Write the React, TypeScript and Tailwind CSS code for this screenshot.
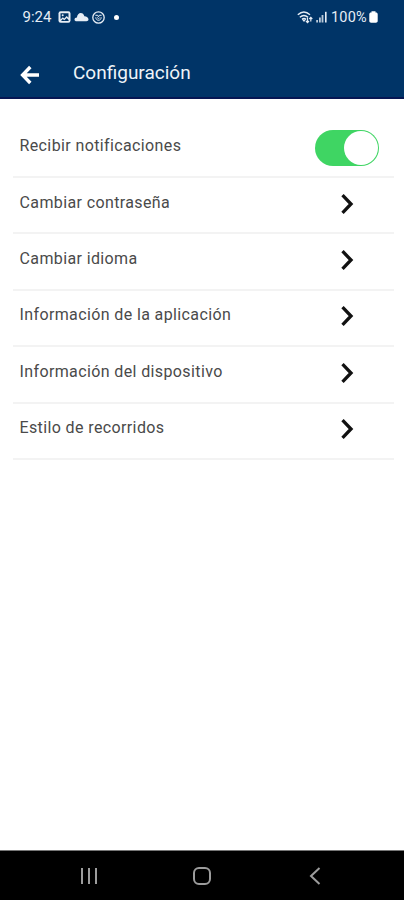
const options = [
  "Cambiar contraseña",
  "Cambiar idioma",
  "Información de la aplicación",
  "Información del dispositivo",
  "Estilo de recorridos",
];

function StatusBar() {
  return (
    <div className="flex h-[34px] items-center justify-between pr-[26px] pl-[22.500px] text-[#e6edf5]">
      <div className="flex items-center">
        <span className="w-[35px] text-[15px] leading-[34px] whitespace-nowrap">9:24</span>
        <svg viewBox="0 0 13 12" className="h-3 w-[13px]" aria-hidden>
          <rect x="0.5" y="0.2" width="12" height="11.6" rx="2.2" fill="currentColor" />
          <path d="M2.500 2.200h8v4.600L8.700 5 6.300 7.600 4.800 6.300 2.500 8.500z" fill="#003467" />
          <path d="M3 10l1.800-2 1.500 1.300L8.700 7l1.900 2v1z" fill="#003467" />
          <circle cx="4.700" cy="4.200" r="1" fill="currentColor" />
        </svg>
        <svg viewBox="0 0 15 10" className="ml-[3px] h-[10px] w-[15px]" fill="currentColor" aria-hidden>
          <path d="M3 9.200C1.200 9.200.5 8.400.5 7.400c0-1.200 1-2 2.400-2C3.300 2.800 4.800 1 6.700 1c1.800 0 3.200 1.200 3.700 3.300 2.300.1 4.100 1.400 4.100 3.200 0 1.100-.9 1.700-2.100 1.700z" />
        </svg>
        <svg viewBox="0 0 13 13" className="ml-[3px] h-[13px] w-[13px]" fill="none" stroke="currentColor" aria-hidden>
          <circle cx="6.500" cy="6.500" r="5.700" strokeWidth="1.300" />
          <path d="M3.400 4.300h2.300l.8 1.500.8-1.500h2.300M3.800 6.300c0 1.700 1.200 3 2.700 3s2.700-1.300 2.700-3M5.200 6.500l1.300 1.300 1.300-1.300" strokeWidth="1" />
        </svg>
        <span className="ml-[9px] h-[5px] w-[5px] rounded-full bg-white" />
      </div>
      <div className="flex items-center">
        <svg viewBox="0 0 17 14" className="h-[14px] w-[17px]" fill="none" stroke="currentColor" aria-hidden>
          <path d="M0.800 4.800c3.800-3.400 8.400-3.400 12.200 0M2.800 7.200c2.600-2.200 5.600-2.200 8.200 0M5 9.400c1.300-1.100 2.700-1.100 4 0" strokeWidth="1.400" />
          <path d="M7 12L5 9.600h4z" fill="currentColor" stroke="none" />
          <path d="M10.500 7.500v5M9 11l1.500 1.700L12 11M13.800 11.500v-4M12.300 9l1.500-1.700L15.300 9" strokeWidth="1.200" />
        </svg>
        <svg viewBox="0 0 12 12" className="ml-[2px] h-3 w-3" fill="currentColor" aria-hidden>
          <rect x="0.200" y="9" width="1.800" height="2.500" opacity="0.800" />
          <rect x="3" y="6.500" width="1.800" height="5" opacity="0.800" />
          <rect x="5.600" y="4" width="1.800" height="7.500" opacity="0.800" />
          <rect x="9" y="0.800" width="1.600" height="10.700" />
        </svg>
        <span className="ml-[3px] w-[38px] pt-px text-[14.500px] leading-[33px] tracking-[0.2px] whitespace-nowrap">100%</span>
        <svg viewBox="0 0 9 12" className="h-3 w-[9px]" fill="#fff" aria-hidden>
          <path d="M2.500.3h4v1.200h.4c1 0 1.800.7 1.800 1.700v6.900c0 1-.8 1.700-1.800 1.700H2.100c-1 0-1.800-.7-1.800-1.700V3.200c0-1 .8-1.700 1.800-1.700h.4z" />
        </svg>
      </div>
    </div>
  );
}

function Header() {
  return (
    <header className="h-[99px] shrink-0 border-b-2 border-[#061653] bg-[#003467]">
      <StatusBar />
      <div className="flex h-[63px] items-center pt-[15px] pl-[20px]">
        <svg viewBox="0 0 20 20" className="mt-[3px] h-5 w-5" fill="none" stroke="#fff" strokeWidth="3.400" aria-hidden>
          <path d="M19 10H3M10.300 2L2.600 10l7.700 8" />
        </svg>
        <h1 className="ml-[33px] text-[19px] leading-6 text-[#eef3f8]">Configuración</h1>
      </div>
    </header>
  );
}

function Toggle() {
  return (
    <button
      type="button"
      role="switch"
      aria-checked="true"
      aria-label="Recibir notificaciones"
      className="flex h-9 w-16 items-center justify-end rounded-full bg-[#3fd563] pr-[1px]"
    >
      <span className="h-[34px] w-[34px] rounded-full bg-white" />
    </button>
  );
}

function NavigationBar() {
  return (
    <nav className="flex h-[50px] shrink-0 items-center border-t border-[#777] bg-black pl-[80px] text-[#9c9c9c]">
      <svg viewBox="0 0 18 18" className="h-[18px] w-[18px]" stroke="currentColor" strokeWidth="2" aria-hidden>
        <path d="M2 1v16M9 1v16M16 1v16" />
      </svg>
      <svg viewBox="0 0 20 20" className="ml-[94px] h-5 w-5" fill="none" stroke="currentColor" strokeWidth="2" aria-hidden>
        <rect x="2" y="2" width="16" height="16" rx="5" />
      </svg>
      <svg viewBox="0 0 12 18" className="ml-[97px] h-[18px] w-3" fill="none" stroke="currentColor" strokeWidth="2" aria-hidden>
        <path d="M10.500 1L2 9l8.500 8" />
      </svg>
    </nav>
  );
}

export default function App() {
  return (
    <div className="flex h-screen w-full flex-col overflow-hidden bg-white font-['Roboto',sans-serif]">
      <Header />
      <main className="flex-1 pr-[10px] pl-[13px] text-base tracking-[0.38px] text-[#4a4a4a]">
        <div className="flex h-[79px] items-center justify-between border-b-2 border-[#f3f3f3] pt-5 pr-[15px] pl-[6.500px]">
          <span className="pb-[3px]">Recibir notificaciones</span>
          <Toggle />
        </div>
        {options.map((option) => (
          <div
            key={option}
            className="flex h-[56.400px] items-center justify-between border-b-2 border-[#f3f3f3] pr-[39px] pb-[3px] pl-[6.500px]"
          >
            <span className="pb-[2px]">{option}</span>
            <svg viewBox="0 0 16 20" className="h-5 w-4" fill="none" stroke="#111" strokeWidth="3.300" aria-hidden>
              <path d="M3.500 1.200l8.500 8.800-8.500 8.800" />
            </svg>
          </div>
        ))}
      </main>
      <NavigationBar />
    </div>
  );
}
